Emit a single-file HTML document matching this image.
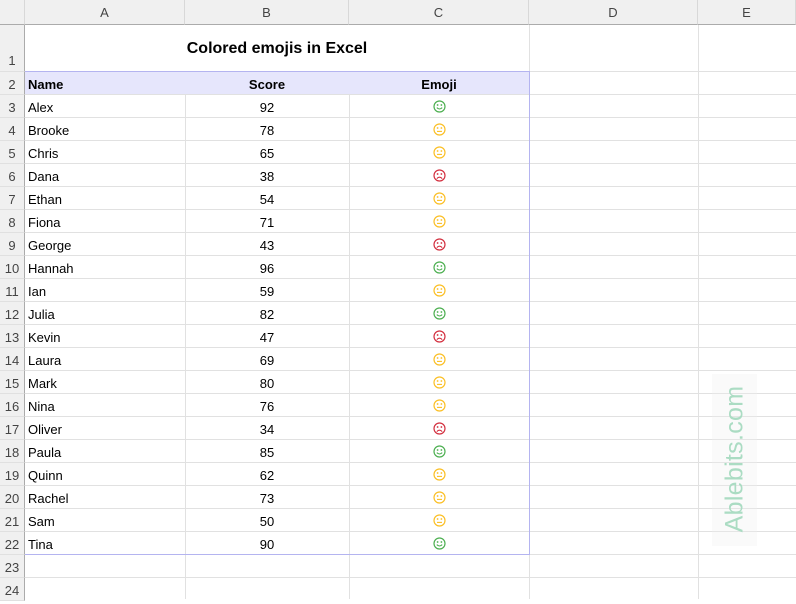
<!DOCTYPE html>
<html><head><meta charset="utf-8"><style>
*{margin:0;padding:0;box-sizing:border-box}
body{width:796px;height:599px;overflow:hidden;background:#fff;font-family:"Liberation Sans",Calibri,sans-serif;position:relative;font-size:13px;color:#000}
.ch{position:absolute;top:0;height:25px;background:#f0f0f0;border-bottom:1px solid #ababab;border-right:1px solid #d8d8d8;text-align:center;line-height:25px;font-size:13px;color:#444}
.rh{position:absolute;left:0;width:25px;background:#f0f0f0;border-right:1px solid #ababab;border-bottom:1px solid #e0e0e0;text-align:center;font-size:13px;color:#444}
.hl{position:absolute;left:25px;right:0;height:1px;background:#e1e1e1}
.vl{position:absolute;top:25px;bottom:0;width:1px;background:#e1e1e1}
table{position:absolute;left:25px;top:94px;border-collapse:collapse}
td{height:23px;padding:3px 0 0 0;font-size:13px;vertical-align:middle}
td.a{width:160px;padding-left:3px}
td.b{width:164px;text-align:center}
td.c{width:180px;text-align:center;padding-top:2px}
svg{display:block;margin:0 auto}
</style></head><body>
<div class="ch" style="left:0;width:25px"></div>
<div class="ch" style="left:25px;width:160px">A</div>
<div class="ch" style="left:185px;width:164px">B</div>
<div class="ch" style="left:349px;width:180px">C</div>
<div class="ch" style="left:529px;width:169px">D</div>
<div class="ch" style="left:698px;width:98px">E</div>
<div class="rh" style="top:25px;height:47px;line-height:72px">1</div>
<div class="rh" style="top:72px;height:23px;line-height:26px">2</div>
<div class="rh" style="top:95px;height:23px;line-height:26px">3</div>
<div class="rh" style="top:118px;height:23px;line-height:26px">4</div>
<div class="rh" style="top:141px;height:23px;line-height:26px">5</div>
<div class="rh" style="top:164px;height:23px;line-height:26px">6</div>
<div class="rh" style="top:187px;height:23px;line-height:26px">7</div>
<div class="rh" style="top:210px;height:23px;line-height:26px">8</div>
<div class="rh" style="top:233px;height:23px;line-height:26px">9</div>
<div class="rh" style="top:256px;height:23px;line-height:26px">10</div>
<div class="rh" style="top:279px;height:23px;line-height:26px">11</div>
<div class="rh" style="top:302px;height:23px;line-height:26px">12</div>
<div class="rh" style="top:325px;height:23px;line-height:26px">13</div>
<div class="rh" style="top:348px;height:23px;line-height:26px">14</div>
<div class="rh" style="top:371px;height:23px;line-height:26px">15</div>
<div class="rh" style="top:394px;height:23px;line-height:26px">16</div>
<div class="rh" style="top:417px;height:23px;line-height:26px">17</div>
<div class="rh" style="top:440px;height:23px;line-height:26px">18</div>
<div class="rh" style="top:463px;height:23px;line-height:26px">19</div>
<div class="rh" style="top:486px;height:23px;line-height:26px">20</div>
<div class="rh" style="top:509px;height:23px;line-height:26px">21</div>
<div class="rh" style="top:532px;height:23px;line-height:26px">22</div>
<div class="rh" style="top:555px;height:23px;line-height:26px">23</div>
<div class="rh" style="top:578px;height:23px;line-height:26px">24</div>

<div class="hl" style="top:71px"></div>
<div class="hl" style="top:94px"></div><div class="hl" style="top:117px"></div><div class="hl" style="top:140px"></div><div class="hl" style="top:163px"></div><div class="hl" style="top:186px"></div><div class="hl" style="top:209px"></div><div class="hl" style="top:232px"></div><div class="hl" style="top:255px"></div><div class="hl" style="top:278px"></div><div class="hl" style="top:301px"></div><div class="hl" style="top:324px"></div><div class="hl" style="top:347px"></div><div class="hl" style="top:370px"></div><div class="hl" style="top:393px"></div><div class="hl" style="top:416px"></div><div class="hl" style="top:439px"></div><div class="hl" style="top:462px"></div><div class="hl" style="top:485px"></div><div class="hl" style="top:508px"></div><div class="hl" style="top:531px"></div><div class="hl" style="top:554px"></div><div class="hl" style="top:577px"></div>
<div class="vl" style="left:185px;top:94px"></div>
<div class="vl" style="left:349px;top:94px"></div>
<div class="vl" style="left:529px"></div>
<div class="vl" style="left:698px"></div>

<div style="position:absolute;left:26px;top:26px;width:503px;height:45px;background:#fff"></div>
<div style="position:absolute;left:25px;top:40px;width:504px;text-align:center;font-weight:bold;font-size:16px">Colored emojis in Excel</div>
<div style="position:absolute;left:25px;top:71px;width:504px;height:23px;background:#e6e6fc;border-top:1px solid #b4b4f0;font-weight:bold;line-height:25px">
<span style="position:absolute;left:3px">Name</span><span style="position:absolute;left:160px;width:164px;text-align:center">Score</span><span style="position:absolute;left:324px;width:180px;text-align:center">Emoji</span></div>
<div style="position:absolute;left:529px;top:71px;width:1px;height:484px;background:#b4b4f0"></div>
<div style="position:absolute;left:25px;top:554px;width:505px;height:1px;background:#b4b4f0"></div>

<svg width="0" height="0" style="position:absolute"><defs>
<g id="g"><circle cx="6.5" cy="6.5" r="5.5" fill="none" stroke="#4caf50" stroke-width="1.2"/><circle cx="4.6" cy="5" r=".9" fill="#4caf50"/><circle cx="8.4" cy="5" r=".9" fill="#4caf50"/><path d="M3.8 7.6Q6.5 10.4 9.2 7.6" fill="none" stroke="#4caf50" stroke-width="1.1"/></g>
<g id="y"><circle cx="6.5" cy="6.5" r="5.5" fill="none" stroke="#fbbf24" stroke-width="1.2"/><circle cx="4.6" cy="5" r=".9" fill="#fbbf24"/><circle cx="8.4" cy="5" r=".9" fill="#fbbf24"/><path d="M4 8.4H9" fill="none" stroke="#fbbf24" stroke-width="1.1"/></g>
<g id="r"><circle cx="6.5" cy="6.5" r="5.5" fill="none" stroke="#d32f3f" stroke-width="1.2"/><circle cx="4.6" cy="5" r=".9" fill="#d32f3f"/><circle cx="8.4" cy="5" r=".9" fill="#d32f3f"/><path d="M3.8 9.6Q6.5 6.8 9.2 9.6" fill="none" stroke="#d32f3f" stroke-width="1.1"/></g>
</defs></svg>

<table>
<tr><td class="a">Alex</td><td class="b">92</td><td class="c"><svg width="13" height="13"><use href="#g"/></svg></td></tr>
<tr><td class="a">Brooke</td><td class="b">78</td><td class="c"><svg width="13" height="13"><use href="#y"/></svg></td></tr>
<tr><td class="a">Chris</td><td class="b">65</td><td class="c"><svg width="13" height="13"><use href="#y"/></svg></td></tr>
<tr><td class="a">Dana</td><td class="b">38</td><td class="c"><svg width="13" height="13"><use href="#r"/></svg></td></tr>
<tr><td class="a">Ethan</td><td class="b">54</td><td class="c"><svg width="13" height="13"><use href="#y"/></svg></td></tr>
<tr><td class="a">Fiona</td><td class="b">71</td><td class="c"><svg width="13" height="13"><use href="#y"/></svg></td></tr>
<tr><td class="a">George</td><td class="b">43</td><td class="c"><svg width="13" height="13"><use href="#r"/></svg></td></tr>
<tr><td class="a">Hannah</td><td class="b">96</td><td class="c"><svg width="13" height="13"><use href="#g"/></svg></td></tr>
<tr><td class="a">Ian</td><td class="b">59</td><td class="c"><svg width="13" height="13"><use href="#y"/></svg></td></tr>
<tr><td class="a">Julia</td><td class="b">82</td><td class="c"><svg width="13" height="13"><use href="#g"/></svg></td></tr>
<tr><td class="a">Kevin</td><td class="b">47</td><td class="c"><svg width="13" height="13"><use href="#r"/></svg></td></tr>
<tr><td class="a">Laura</td><td class="b">69</td><td class="c"><svg width="13" height="13"><use href="#y"/></svg></td></tr>
<tr><td class="a">Mark</td><td class="b">80</td><td class="c"><svg width="13" height="13"><use href="#y"/></svg></td></tr>
<tr><td class="a">Nina</td><td class="b">76</td><td class="c"><svg width="13" height="13"><use href="#y"/></svg></td></tr>
<tr><td class="a">Oliver</td><td class="b">34</td><td class="c"><svg width="13" height="13"><use href="#r"/></svg></td></tr>
<tr><td class="a">Paula</td><td class="b">85</td><td class="c"><svg width="13" height="13"><use href="#g"/></svg></td></tr>
<tr><td class="a">Quinn</td><td class="b">62</td><td class="c"><svg width="13" height="13"><use href="#y"/></svg></td></tr>
<tr><td class="a">Rachel</td><td class="b">73</td><td class="c"><svg width="13" height="13"><use href="#y"/></svg></td></tr>
<tr><td class="a">Sam</td><td class="b">50</td><td class="c"><svg width="13" height="13"><use href="#y"/></svg></td></tr>
<tr><td class="a">Tina</td><td class="b">90</td><td class="c"><svg width="13" height="13"><use href="#g"/></svg></td></tr>
</table>

<div style="position:absolute;left:712px;top:374px;width:45px;height:172px;background:rgba(240,240,240,0.3)"></div>
<div style="position:absolute;left:735px;top:459px;transform:translate(-50%,-50%) rotate(-90deg);white-space:nowrap;font-size:25px;color:#abdcc3;letter-spacing:0.3px">Ablebits.com</div>
</body></html>
